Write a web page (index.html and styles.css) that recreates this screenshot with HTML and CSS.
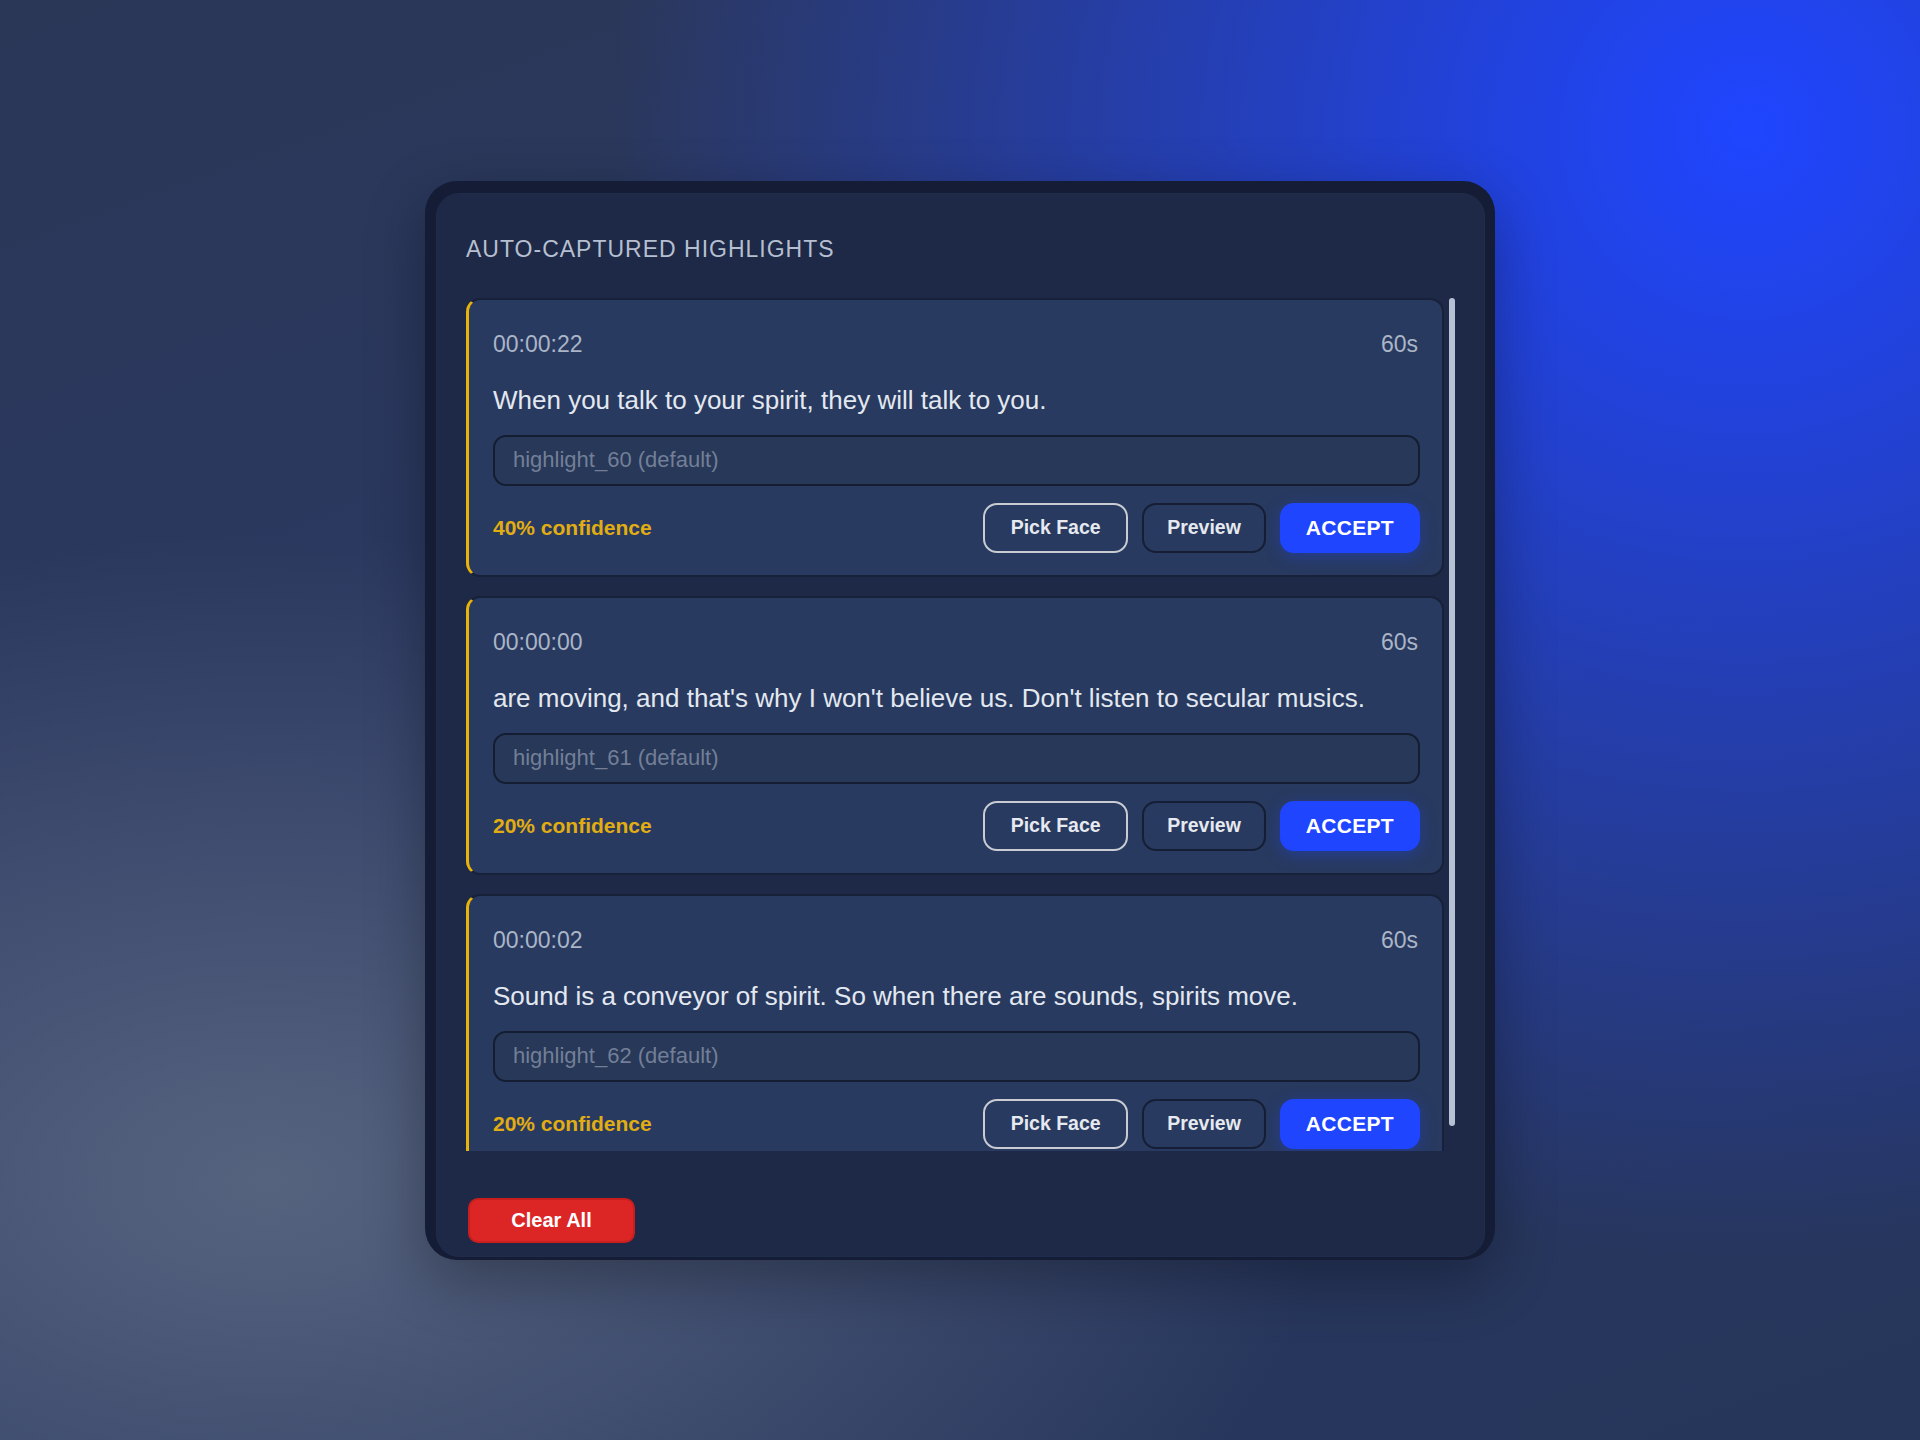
FILE: index.html
```html
<!DOCTYPE html>
<html lang="en">

<head>
    <meta charset="UTF-8">
    <meta name="viewport" content="width=device-width, initial-scale=1.0">
    <title>Auto-captured highlights</title>
    <link rel="stylesheet" href="styles.css">
</head>

<body>
    <div class="frame">
        <div class="panel">
            <h2 class="panel-title">AUTO-CAPTURED HIGHLIGHTS</h2>

            <!-- 하이라이트 목록 -->
            <div class="list-wrap">
                <div class="list">
                    <div class="card">
                        <div class="card-head">
                            <span class="time">00:00:22</span>
                            <span class="length">60s</span>
                        </div>
                        <p class="quote">When you talk to your spirit, they will talk to you.</p>
                        <input class="name-input" type="text" placeholder="highlight_60 (default)">
                        <div class="card-foot">
                            <span class="confidence">40% confidence</span>
                            <div class="actions">
                                <button class="btn btn-face">Pick Face</button>
                                <button class="btn btn-preview">Preview</button>
                                <button class="btn btn-accept">ACCEPT</button>
                            </div>
                        </div>
                    </div>

                    <div class="card">
                        <div class="card-head">
                            <span class="time">00:00:00</span>
                            <span class="length">60s</span>
                        </div>
                        <p class="quote">are moving, and that's why I won't believe us. Don't listen to secular musics.</p>
                        <input class="name-input" type="text" placeholder="highlight_61 (default)">
                        <div class="card-foot">
                            <span class="confidence">20% confidence</span>
                            <div class="actions">
                                <button class="btn btn-face">Pick Face</button>
                                <button class="btn btn-preview">Preview</button>
                                <button class="btn btn-accept">ACCEPT</button>
                            </div>
                        </div>
                    </div>

                    <div class="card">
                        <div class="card-head">
                            <span class="time">00:00:02</span>
                            <span class="length">60s</span>
                        </div>
                        <p class="quote">Sound is a conveyor of spirit. So when there are sounds, spirits move.</p>
                        <input class="name-input" type="text" placeholder="highlight_62 (default)">
                        <div class="card-foot">
                            <span class="confidence">20% confidence</span>
                            <div class="actions">
                                <button class="btn btn-face">Pick Face</button>
                                <button class="btn btn-preview">Preview</button>
                                <button class="btn btn-accept">ACCEPT</button>
                            </div>
                        </div>
                    </div>
                </div>

                <!-- 스크롤바 -->
                <div class="scrollbar">
                    <div class="thumb"></div>
                </div>
            </div>

            <div class="panel-foot">
                <button class="btn-clear">Clear All</button>
            </div>
        </div>
    </div>
</body>

</html>
```

FILE: styles.css
```css
body {
    display: flex;
    justify-content: center;
    align-items: center;
    height: 100vh;
    margin: 0;
    font-family: "Liberation Sans", Arial, sans-serif;
    background:
        radial-gradient(circle at 91% 9%, #1f45ff 0%, rgba(31, 69, 255, 0.75) 14%, rgba(31, 69, 255, 0) 52%),
        radial-gradient(ellipse 55% 45% at 14% 82%, #56637f 0%, rgba(86, 99, 127, 0) 100%),
        linear-gradient(160deg, #2b3757 0%, #2a3862 45%, #26355a 100%);
}

.frame {
    background-color: #141d35;
    border-radius: 32px;
    padding: 12px 10px 3px 11px;
    box-shadow: 0 20px 60px rgba(0, 0, 0, 0.3);
}

.panel {
    width: 989px;
    background-color: #1d2946;
    border-radius: 24px;
    padding: 42px 30px 14px 30px;
    box-shadow: inset 0 0 0 1px #1f2c4b;
}

.panel-title {
    margin: 0 0 35px 0;
    font-size: 23px;
    line-height: 28px;
    font-weight: normal;
    letter-spacing: 1px;
    color: #b6bfd0;
}

/* 목록 + 스크롤바 */
.list-wrap {
    display: flex;
    gap: 5px;
}

.list {
    flex: 1;
    height: 853px;
    overflow: hidden;
    display: flex;
    flex-direction: column;
    gap: 19px;
}

.scrollbar {
    width: 6px;
}

.thumb {
    height: 828px;
    border-radius: 3px;
    background-color: #b7c1d4;
}

/* 카드 */
.card {
    flex-shrink: 0;
    background-color: #283a5f;
    border: 2px solid #172139;
    border-left: 3px solid #eab308;
    border-radius: 14px;
    padding: 30px 22px 22px 24px;
}

.card-head {
    display: flex;
    justify-content: space-between;
    font-size: 23px;
    line-height: 28px;
    color: #abb5c8;
}

.length {
    margin-right: 2px;
}

.quote {
    margin: 26px 0 19px 0;
    font-size: 26px;
    line-height: 32px;
    color: #e3e8f0;
}

.name-input {
    display: block;
    box-sizing: border-box;
    width: 100%;
    height: 51px;
    padding: 0 18px;
    background-color: #273859;
    border: 2px solid #141d31;
    border-radius: 13px;
    font-family: inherit;
    font-size: 22px;
    color: #e3e8f0;
    outline: none;
}

.name-input::placeholder {
    color: #737f96;
}

.card-foot {
    display: flex;
    justify-content: space-between;
    align-items: center;
    margin-top: 17px;
}

.confidence {
    font-size: 21px;
    font-weight: bold;
    color: #e2ad12;
}

.actions {
    display: flex;
    gap: 14px;
}

.btn {
    height: 50px;
    padding: 0 24px;
    border-radius: 14px;
    font-family: inherit;
    font-size: 19.5px;
    font-weight: bold;
    color: #e6e9ef;
    background: none;
    cursor: pointer;
}

.btn-face {
    padding: 0 25.5px;
    border: 2.5px solid #c9ccd3;
}

.btn-preview {
    padding: 0 23px;
    border: 2px solid #151e34;
}

.btn-accept {
    border: 2px solid #1f45ff;
    background-color: #1f45ff;
    color: #ffffff;
    font-size: 21px;
    letter-spacing: 0.3px;
    box-shadow: 0 4px 16px rgba(31, 69, 255, 0.35);
}

/* 하단 */
.panel-foot {
    margin-top: 47px;
    padding-left: 2px;
}

.btn-clear {
    width: 167px;
    height: 45px;
    background-color: #dc2626;
    border: 2px solid #c81e1e;
    border-radius: 10px;
    font-family: inherit;
    font-size: 20px;
    font-weight: bold;
    color: #ffffff;
    cursor: pointer;
}
```
